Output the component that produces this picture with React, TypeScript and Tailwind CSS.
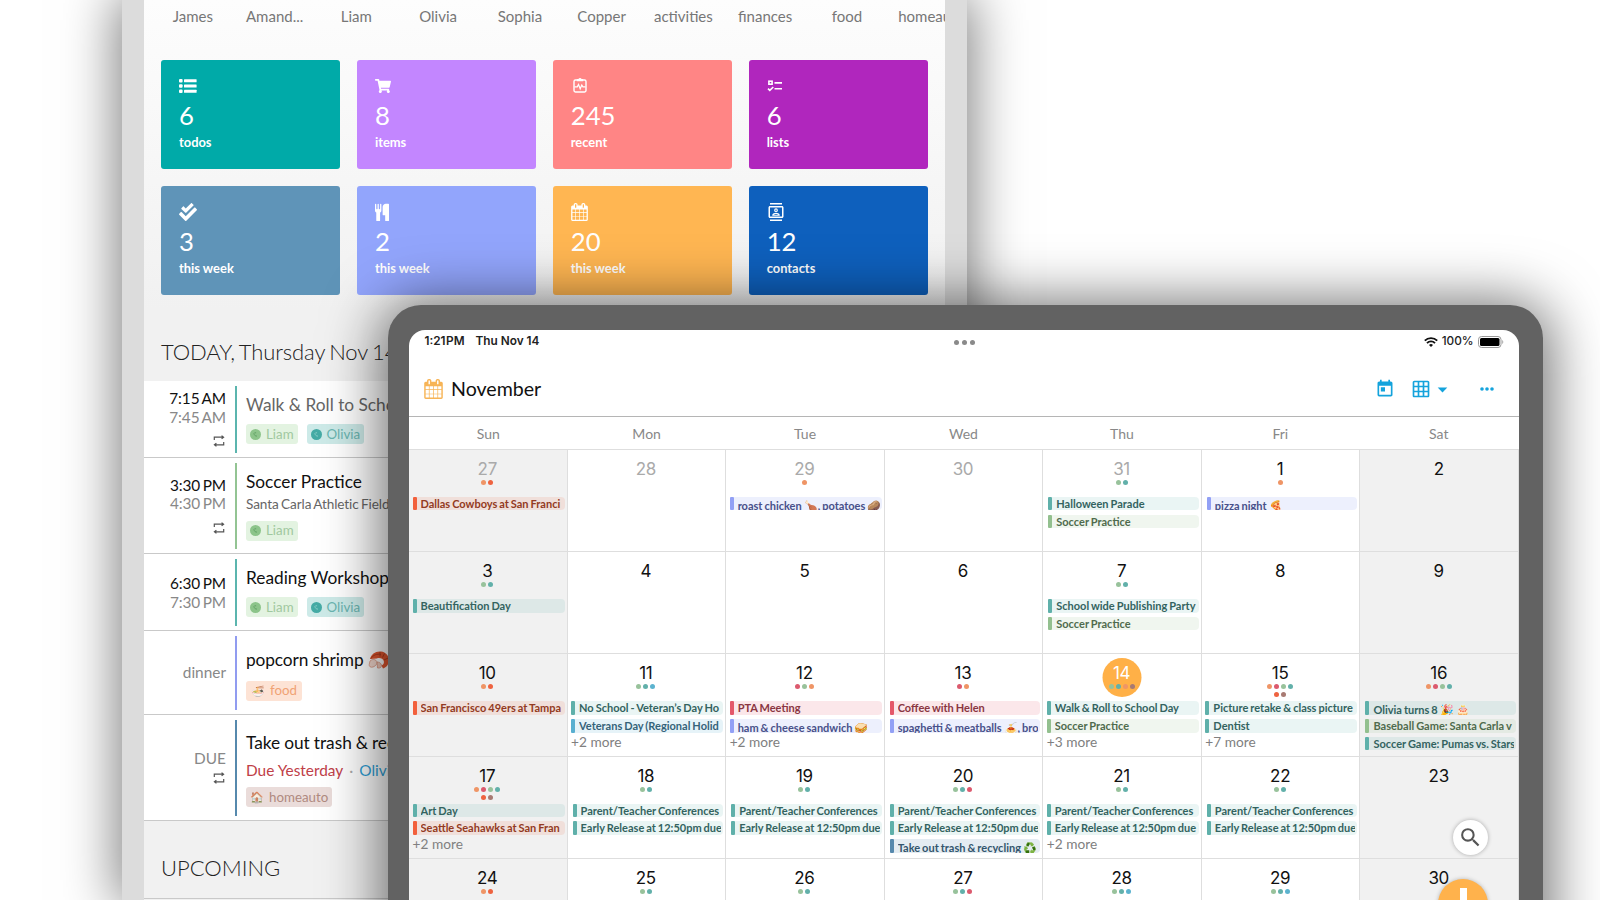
import type { ReactNode } from 'react'
import clsx from 'clsx'
import {
  MdArrowDropDown,
  MdGridOn,
  MdOutlineContacts,
  MdSearch,
  MdToday,
} from 'react-icons/md'
import { FaCheckDouble, FaShoppingCart } from 'react-icons/fa'

/* ---------- icons ---------- */

function CalendarIcon({ className }: { className?: string }) {
  return (
    <svg viewBox="0 0 1664 1792" fill="currentColor" className={className}>
      <path d="M128 1664h288v-288h-288v288zm352 0h320v-288h-320v288zm-352-352h288v-320h-288v320zm352 0h320v-320h-320v320zm-352-384h288v-288h-288v288zm736 736h320v-288h-320v288zm-384-736h320v-288h-320v288zm768 736h288v-288h-288v288zm-384-352h320v-320h-320v320zm-352-864v-288q0-13-9.5-22.5t-22.5-9.5h-64q-13 0-22.5 9.5t-9.5 22.5v288q0 13 9.5 22.5t22.5 9.5h64q13 0 22.5-9.5t9.5-22.5zm736 864h288v-320h-288v320zm-384-384h320v-288h-320v288zm384 0h288v-288h-288v288zm32-480v-288q0-13-9.5-22.5t-22.5-9.5h-64q-13 0-22.5 9.5t-9.5 22.5v288q0 13 9.5 22.5t22.5 9.5h64q13 0 22.5-9.5t9.5-22.5zm384-64v1280q0 52-38 90t-90 38h-1408q-52 0-90-38t-38-90v-1280q0-52 38-90t90-38h128v-96q0-66 47-113t113-47h64q66 0 113 47t47 113v96h384v-96q0-66 47-113t113-47h64q66 0 113 47t47 113v96h128q52 0 90 38t38 90z" />
    </svg>
  )
}

function ListIcon() {
  return (
    <svg viewBox="0 0 18 14" fill="currentColor" className="h-[14px] w-[18px]">
      <rect x="0" y="0" width="3.6" height="3.4" rx="1" />
      <rect x="0" y="5.3" width="3.6" height="3.4" rx="1" />
      <rect x="0" y="10.6" width="3.6" height="3.4" rx="1" />
      <rect x="5" y="0.2" width="12.6" height="3" rx="0.5" />
      <rect x="5" y="5.5" width="12.6" height="3" rx="0.5" />
      <rect x="5" y="10.8" width="12.6" height="3" rx="0.5" />
    </svg>
  )
}

function PulseIcon() {
  return (
    <svg
      viewBox="0 0 18 18"
      fill="none"
      stroke="currentColor"
      strokeWidth="1.4"
      className="ml-[1px] h-[18px] w-[18px]"
    >
      <rect x="2" y="3" width="12" height="12" rx="1.4" />
      <path d="M5.5 3.6v-1H7a1 1 0 0 1 2 0h1.5v1z" fill="currentColor" />
      <path d="M2.5 9.8h2.8l1.2-2.4 1.7 4.4 1.6-3.8 1.1 1.8h2.6" strokeWidth="1.2" />
    </svg>
  )
}

function ChecklistIcon() {
  return (
    <svg
      viewBox="0 0 18 14"
      fill="none"
      stroke="currentColor"
      strokeWidth="1.6"
      className="h-[14px] w-[18px]"
    >
      <rect x="1.9" y="2.2" width="3.2" height="3" />
      <path d="M7.5 3.9H15M7.5 9.7H15M1 9.7l1.8 1.7L6.3 8" />
    </svg>
  )
}

function CutleryIcon() {
  return (
    <svg viewBox="0 0 1408 1792" fill="currentColor" className="h-[18px] w-[14px]">
      <path d="M640 128v640q0 61-35.5 111t-92.5 70v779q0 52-38 90t-90 38h-128q-52 0-90-38t-38-90V949q-57-20-92.5-70T0 768V128q0-26 19-45t45-19 45 19 19 45v416q0 26 19 45t45 19 45-19 19-45V128q0-26 19-45t45-19 45 19 19 45v416q0 26 19 45t45 19 45-19 19-45V128q0-26 19-45t45-19 45 19 19 45zm768 0v1600q0 52-38 90t-90 38h-128q-52 0-90-38t-38-90v-512H800q-13 0-22.5-9.5T768 1184V384q0-132 94-226t226-94h256q26 0 45 19t19 45z" />
    </svg>
  )
}

function RepeatIcon() {
  return (
    <svg
      viewBox="0 0 12 12"
      fill="none"
      stroke="#555"
      strokeWidth="1.2"
      className="h-3 w-3"
    >
      <path d="M1.3 5V2.2H10M8.6.6l2 1.6-2 1.6M10.7 7v2.800H2M3.400 8.200l-2 1.600 2 1.600" />
    </svg>
  )
}

function ShrimpIcon() {
  return (
    <svg viewBox="0 0 22 20" className="inline-block h-[20px] w-[22px] align-[-4px]">
      <path d="M2 9C3 4 8 .8 13 1.500c5 .6 8 4.500 8 8.500 0 4-2.500 7.500-6 8.500l-1.500-3c2-.8 2.800-2.500 2.300-4.500-.8-2.500-4-3.500-7-2.500z" fill="#e4572e" />
      <path d="M3 8.500C5 5 9 3.500 13 4.500M12 2v4.500M16.500 3.500l-2 4M20 8l-4 2" stroke="#a93a1c" strokeWidth=".9" fill="none" />
      <path d="M2 11c2-2 5-2 6.500 0S8 16 5 17c-2.500.8-4-.5-3.800-2.500z" fill="#f4d9cf" stroke="#d88b72" strokeWidth=".7" />
      <path d="M9 12c2 0 4 1 4.500 3s-1.500 3.500-4 3z" fill="#f1cabc" stroke="#d88b72" strokeWidth=".7" />
    </svg>
  )
}

/* ---------- dashboard (tablet at the back) ---------- */

const PEOPLE = [
  'James', 'Amand...', 'Liam', 'Olivia', 'Sophia', 'Copper',
  'activities', 'finances', 'food', 'homeauto',
]

const TILES: { bg: string; count: number; label: string; icon: ReactNode }[] = [
  { bg: 'bg-[#00aaa8]', count: 6, label: 'todos', icon: <ListIcon /> },
  { bg: 'bg-[#c386ff]', count: 8, label: 'items', icon: <FaShoppingCart size={16} /> },
  { bg: 'bg-[#ff8585]', count: 245, label: 'recent', icon: <PulseIcon /> },
  { bg: 'bg-[#b026bd]', count: 6, label: 'lists', icon: <ChecklistIcon /> },
  { bg: 'bg-[#5f94b8]', count: 3, label: 'this week', icon: <FaCheckDouble size={18} /> },
  { bg: 'bg-[#92a5fc]', count: 2, label: 'this week', icon: <CutleryIcon /> },
  {
    bg: 'bg-[#ffb652]',
    count: 20,
    label: 'this week',
    icon: <CalendarIcon className="h-[18px] w-[17px]" />,
  },
  {
    bg: 'bg-[#0e60bd]',
    count: 12,
    label: 'contacts',
    icon: <MdOutlineContacts size={18} />,
  },
]

function PersonTag({ name, color }: { name: string; color: 'green' | 'teal' }) {
  const green = color === 'green'
  return (
    <span
      className={clsx(
        'flex h-5 items-center gap-[5px] rounded-[3px] px-[4px] text-[13.3px]',
        green ? 'bg-[#e3f3e1] text-[#a0c89f]' : 'bg-[#cdeae8] text-[#69b5b0]'
      )}
    >
      <svg viewBox="0 0 11 11" className="h-[11px] w-[11px]">
        <circle cx="5.5" cy="5.5" r="5.5" fill={green ? '#8cc48a' : '#45aba5'} />
        <path
          d="M3.8 4.2c.3 1.8 1.4 3 3.2 2.9M4.5 3.8h1.6"
          stroke={green ? '#5f9e62' : '#8fd0cb'}
          strokeWidth="0.9"
          fill="none"
        />
      </svg>
      {name}
    </span>
  )
}

function AgendaRow({
  height,
  bar,
  time,
  children,
}: {
  height: string
  bar: string
  time: ReactNode
  children: ReactNode
}) {
  return (
    <div className={clsx('flex border-b border-[#c9c9c9] bg-white py-[5px] pb-[4px]', height)}>
      <div className="w-[82px] text-right text-[15.4px] leading-[18.5px] text-[#888]">
        {time}
      </div>
      <div className={clsx('ml-[9px] w-[2px]', bar)} />
      <div className="ml-[9px] flex-1 whitespace-nowrap">{children}</div>
    </div>
  )
}

function TimeRange({ from, to }: { from: string; to: string }) {
  return (
    <div className="flex flex-col tracking-[-0.1px] [word-spacing:-1.3px]">
      <span className="text-[#111]">{from}</span>
      <span>{to}</span>
    </div>
  )
}

function Dashboard() {
  return (
    <div className="ml-[122px] h-[900px] w-[845px] bg-[#dcdcdc] px-[22px] shadow-[0_0_50px_5px_rgba(0,0,0,0.5)]">
      <div className="h-full overflow-hidden bg-[linear-gradient(#fdfdfd,#f1f1f1_310px)]">
        <div className="flex h-[59.7px] pl-[8px]">
          {PEOPLE.map((p) => (
            <div
              key={p}
              className="w-[81.75px] shrink-0 pt-[6px] text-center text-[15px] leading-[21px] text-[#777] last:pl-[6px]"
            >
              {p}
            </div>
          ))}
        </div>

        <div className="grid grid-cols-4 gap-x-[17px] gap-y-[17px] px-[17px] pr-[17.5px]">
          {TILES.map((t) => (
            <div
              key={t.bg}
              className={clsx('h-[109px] rounded-[3px] pt-[17px] pl-[18px] text-white', t.bg)}
            >
              <div className="flex h-[19px] items-center">{t.icon}</div>
              <div className="mt-[4px] text-[25.7px] leading-[30px]">{t.count}</div>
              <div className="mt-[3.5px] text-[12.9px] leading-[18px] font-bold">{t.label}</div>
            </div>
          ))}
        </div>

        <h2 className="mt-[26.8px] flex h-[60px] items-center pl-[17px] text-[22px] font-light tracking-[-0.1px] text-[#222] [word-spacing:-1.5px]">
          TODAY, Thursday Nov 14
        </h2>

        <AgendaRow
          height="h-[76.5px]"
          bar="bg-[#5bb5ae]"
          time={
            <div className="flex flex-col items-end pt-[3px]">
              <TimeRange from="7:15 AM" to="7:45 AM" />
              <div className="mt-[9px] mr-px"><RepeatIcon /></div>
            </div>
          }
        >
          <div className="pt-[7px] text-[17.3px] leading-[24px] text-[#666]">
            Walk &amp; Roll to School Day
          </div>
          <div className="mt-[7px] flex gap-[9px]">
            <PersonTag name="Liam" color="green" />
            <PersonTag name="Olivia" color="teal" />
          </div>
        </AgendaRow>

        <AgendaRow
          height="h-[96.5px]"
          bar="bg-[#93c493]"
          time={
            <div className="flex flex-col items-end pt-[13px]">
              <TimeRange from="3:30 PM" to="4:30 PM" />
              <div className="mt-[9px] mr-px"><RepeatIcon /></div>
            </div>
          }
        >
          <div className="pt-[7px] text-[17.3px] leading-[24px] text-[#111]">Soccer Practice</div>
          <div className="text-[13.6px] leading-[21px] tracking-[-0.1px] text-[#666] [word-spacing:-1px]">
            Santa Carla Athletic Fields
          </div>
          <div className="mt-[6px] flex">
            <PersonTag name="Liam" color="green" />
          </div>
        </AgendaRow>

        <AgendaRow
          height="h-[76.5px]"
          bar="bg-[#5bb5ae]"
          time={
            <div className="flex flex-col items-end pt-[15px]">
              <TimeRange from="6:30 PM" to="7:30 PM" />
            </div>
          }
        >
          <div className="pt-[7px] text-[17.3px] leading-[24px] text-[#111]">
            Reading Workshop
          </div>
          <div className="mt-[7px] flex gap-[9px]">
            <PersonTag name="Liam" color="green" />
            <PersonTag name="Olivia" color="teal" />
          </div>
        </AgendaRow>

        <AgendaRow
          height="h-[84px]"
          bar="bg-[#919cf0]"
          time={<div className="pt-[27px]">dinner</div>}
        >
          <div className="h-[36px] pt-[12px] text-[17.3px] leading-[24px] text-[#111]">
            <span className="tracking-[-0.1px]">popcorn shrimp</span> <ShrimpIcon />
          </div>
          <div className="mt-[9px] flex">
            <span className="flex h-5 items-center rounded-[3px] bg-[#fde3d5] px-[5px] text-[13.3px] text-[#f0a274]">
              <span className="mr-[5px] text-[11px] opacity-80">🍜</span>
              food
            </span>
          </div>
        </AgendaRow>

        <AgendaRow
          height="h-[106px]"
          bar="bg-[#5689ad]"
          time={
            <div className="flex flex-col items-end pt-[29px]">
              <span>DUE</span>
              <div className="mt-[5px] mr-px"><RepeatIcon /></div>
            </div>
          }
        >
          <div className="pt-[11.5px] text-[17.3px] leading-[24px] text-[#111] [word-spacing:-0.5px]">
            Take out trash &amp; recycling
          </div>
          <div className="mt-[3.5px] text-[15.4px] leading-[22px] text-[#c04048]">
            Due Yesterday<span className="mx-[6px] text-[#aaa]">·</span>
            <span className="text-[#2f9fd6]">Olivia</span>
          </div>
          <div className="mt-[6.5px] flex">
            <span className="flex h-5 items-center rounded-[3px] bg-[#eadcda] px-[4px] text-[13.3px] text-[#b08a80]">
              <span className="mr-[5px] text-[11px] opacity-80">🏠</span>
              homeauto
            </span>
          </div>
        </AgendaRow>

        <h2 className="flex h-[78px] items-center border-b border-[#c9c9c9] pt-[17px] pl-[17px] text-[22px] font-light text-[#222]">
          UPCOMING
        </h2>
      </div>
    </div>
  )
}

/* ---------- calendar (tablet in front) ---------- */

type Tone = 'teal' | 'green' | 'orange' | 'indigo' | 'red' | 'blue' | 'steel'

const TONES: Record<Tone, { bar: string; body: string }> = {
  teal: { bar: 'bg-[#5fb0aa]', body: 'bg-[#5fb0aa]/13 text-[#33635f]' },
  green: { bar: 'bg-[#93c08f]', body: 'bg-[#93c08f]/14 text-[#4f6b4d]' },
  orange: { bar: 'bg-[#f2603c]', body: 'bg-[#f2603c]/12 text-[#933a22]' },
  indigo: { bar: 'bg-[#92a0f5]', body: 'bg-[#92a0f5]/16 text-[#48508a]' },
  red: { bar: 'bg-[#e4586a]', body: 'bg-[#e4586a]/14 text-[#8a3642]' },
  blue: { bar: 'bg-[#58afd0]', body: 'bg-[#58afd0]/15 text-[#35637a]' },
  steel: { bar: 'bg-[#5689ad]', body: 'bg-[#5689ad]/16 text-[#33556d]' },
}

const DOTS = {
  a: 'bg-[#ef9566]', // amber
  o: 'bg-[#ee6340]', // orange
  g: 'bg-[#98c29b]', // green
  t: 'bg-[#62b0aa]', // teal
  r: 'bg-[#dc5a6e]', // red
  b: 'bg-[#a87a72]', // brown
  c: 'bg-[#5cb3cf]', // cyan
}

interface CalEvent {
  text: string
  tone: Tone
  /** Titles with emoji sit lower and get cut at the baseline. */
  low?: boolean
}

interface Day {
  n: number
  muted?: boolean
  today?: boolean
  dots?: string[]
  events?: CalEvent[]
  more?: number
  inset?: boolean
}

const CONFERENCES: CalEvent = { text: 'Parent/Teacher Conferences', tone: 'teal' }
const EARLY: CalEvent = { text: 'Early Release at 12:50pm due', tone: 'teal' }
const SOCCER: CalEvent = { text: 'Soccer Practice', tone: 'green' }

const DAYS: Day[] = [
  { n: 27, muted: true, dots: ['ao'], events: [{ text: 'Dallas Cowboys at San Franci', tone: 'orange' }] },
  { n: 28, muted: true },
  { n: 29, muted: true, dots: ['a'], events: [{ text: 'roast chicken 🍗, potatoes 🥔', tone: 'indigo', low: true }] },
  { n: 30, muted: true },
  { n: 31, muted: true, dots: ['gt'], inset: true, events: [{ text: 'Halloween Parade', tone: 'teal' }, SOCCER] },
  { n: 1, dots: ['a'], inset: true, events: [{ text: 'pizza night 🍕', tone: 'indigo', low: true }] },
  { n: 2 },
  { n: 3, dots: ['gt'], events: [{ text: 'Beautification Day', tone: 'teal' }] },
  { n: 4 },
  { n: 5 },
  { n: 6 },
  { n: 7, dots: ['gt'], inset: true, events: [{ text: 'School wide Publishing Party', tone: 'teal' }, SOCCER] },
  { n: 8 },
  { n: 9 },
  { n: 10, dots: ['ao'], events: [{ text: 'San Francisco 49ers at Tampa', tone: 'orange' }] },
  {
    n: 11,
    dots: ['gtc'],
    more: 2,
    events: [
      { text: 'No School - Veteran’s Day Ho', tone: 'teal' },
      { text: 'Veterans Day (Regional Holid', tone: 'blue' },
    ],
  },
  {
    n: 12,
    dots: ['rga'],
    more: 2,
    events: [
      { text: 'PTA Meeting', tone: 'red' },
      { text: 'ham & cheese sandwich 🥪', tone: 'indigo', low: true },
    ],
  },
  {
    n: 13,
    dots: ['ra'],
    inset: true,
    events: [
      { text: 'Coffee with Helen', tone: 'red' },
      { text: 'spaghetti & meatballs 🍝, broc', tone: 'indigo', low: true },
    ],
  },
  {
    n: 14,
    today: true,
    dots: ['gtab'],
    more: 3,
    events: [{ text: 'Walk & Roll to School Day', tone: 'teal' }, SOCCER],
  },
  {
    n: 15,
    dots: ['argt', 'ob'],
    more: 7,
    events: [
      { text: 'Picture retake & class picture', tone: 'teal' },
      { text: 'Dentist', tone: 'teal' },
    ],
  },
  {
    n: 16,
    dots: ['argt'],
    inset: true,
    events: [
      { text: 'Olivia turns 8 🎉 🎂', tone: 'teal', low: true },
      { text: 'Baseball Game: Santa Carla v', tone: 'green' },
      { text: 'Soccer Game: Pumas vs. Stars', tone: 'teal' },
    ],
  },
  {
    n: 17,
    dots: ['argt', 'ob'],
    more: 2,
    events: [
      { text: 'Art Day', tone: 'teal' },
      { text: 'Seattle Seahawks at San Fran', tone: 'orange' },
    ],
  },
  { n: 18, dots: ['gt'], inset: true, events: [CONFERENCES, EARLY] },
  { n: 19, dots: ['gt'], inset: true, events: [CONFERENCES, EARLY] },
  {
    n: 20,
    dots: ['gtr'],
    inset: true,
    events: [CONFERENCES, EARLY, { text: 'Take out trash & recycling ♻️', tone: 'steel', low: true }],
  },
  { n: 21, dots: ['gt'], more: 2, events: [CONFERENCES, EARLY] },
  { n: 22, dots: ['gt'], inset: true, events: [CONFERENCES, EARLY] },
  { n: 23 },
  { n: 24, dots: ['ao'] },
  { n: 25, dots: ['gt'] },
  { n: 26, dots: ['gt'] },
  { n: 27, dots: ['gtr'] },
  { n: 28, dots: ['gtc'] },
  { n: 29, dots: ['gtc'] },
  { n: 30 },
]

function EventChip({ event }: { event: CalEvent }) {
  const tone = TONES[event.tone]
  return (
    <div className="mb-[4.3px] flex h-[13.4px] overflow-hidden">
      <div className={clsx('w-[4px] shrink-0 rounded-[1px]', tone.bar)} />
      <div className={clsx('flex-1 overflow-hidden rounded-r-[4px] pr-[2px] pl-[4px]', tone.body)}>
        <div
          className={clsx(
            'overflow-hidden text-[11px] leading-[13px] font-bold whitespace-nowrap [word-spacing:-0.7px]',
            event.low && 'pt-[2px]'
          )}
        >
          {event.text}
        </div>
      </div>
    </div>
  )
}

function DayCell({ day, index }: { day: Day; index: number }) {
  const col = index % 7
  const weekend = col === 0 || col === 6
  return (
    <div
      className={clsx(
        'relative overflow-hidden border-t border-r border-[#dedede] pt-[9.2px]',
        weekend && 'bg-[#f1f1f1]'
      )}
    >
      {day.today && (
        <div className="absolute top-[4px] left-1/2 h-[39px] w-[39px] -translate-x-1/2 rounded-full bg-[#ffb047]" />
      )}
      <div
        className={clsx(
          'relative h-5 pr-px text-center font-[Inter] text-[17px] leading-5 tracking-[-0.3px]',
          day.muted ? 'text-[#aaa]' : day.today ? 'text-white' : 'text-[#111]'
        )}
      >
        {day.n}
      </div>
      <div className="relative flex h-[18px] flex-col gap-[3px] pt-[1px] pr-px">
        {day.dots?.map((row, i) => (
          <div key={i} className="flex justify-center gap-[2px]">
            {row.split('').map((d, j) => (
              <span
                key={j}
                className={clsx('h-[5px] w-[5px] rounded-full', DOTS[d as keyof typeof DOTS])}
              />
            ))}
          </div>
        ))}
      </div>
      <div className={clsx('pr-[2px]', day.inset ? 'pl-[5px]' : 'pl-[3.5px]')}>
        {day.events?.map((e) => <EventChip key={e.text} event={e} />)}
        {day.more && (
          <div className="-mt-[3px] text-[13.7px] leading-[16px] text-[#808080]">
            +{day.more} more
          </div>
        )}
      </div>
    </div>
  )
}

function StatusBar() {
  return (
    <div className="flex h-[24px] items-center justify-between px-[15.5px] pt-px font-[Inter] text-[11.8px] font-semibold text-[#222]">
      <div className="flex w-[200px] gap-[11px]">
        <span className="[word-spacing:-2.5px]">1:21 PM</span>
        <span>Thu Nov 14</span>
      </div>
      <div className="flex gap-[3px]">
        <span className="h-[5px] w-[5px] rounded-full bg-[#8a8a8a]" />
        <span className="h-[5px] w-[5px] rounded-full bg-[#8a8a8a]" />
        <span className="h-[5px] w-[5px] rounded-full bg-[#8a8a8a]" />
      </div>
      <div className="flex w-[200px] items-center justify-end">
        <svg viewBox="0 0 14 10" className="h-[10px] w-[14px]" fill="none" stroke="#111" strokeWidth="1.9">
          <path d="M.8 3.7a8.8 8.8 0 0 1 12.4 0M3 6.1a5.6 5.6 0 0 1 8 0" />
          <path d="M5 7.9a2.9 2.9 0 0 1 4 0L7 9.9z" fill="#111" stroke="none" />
        </svg>
        <span className="ml-[4px] font-medium">100%</span>
        <svg viewBox="0 0 26 12" className="ml-[4px] h-[12px] w-[26px]">
          <rect x=".5" y=".5" width="22.5" height="11" rx="3" fill="none" stroke="#999" />
          <rect x="2" y="2" width="19.5" height="8" rx="1.5" fill="#000" />
          <path d="M24.3 4v4c1.3-.5 1.3-3.5 0-4z" fill="#999" />
        </svg>
      </div>
    </div>
  )
}

function CalendarApp() {
  return (
    <div className="absolute top-[305px] left-[388px] h-[700px] w-[1155px] rounded-t-[33px] bg-[#626262] px-[21px] pt-[24.5px] pr-[24px] shadow-[0_4px_56px_8px_rgba(0,0,0,0.56)]">
      <div className="relative h-full overflow-hidden rounded-t-[16px] bg-white">
        <StatusBar />

        <div className="flex h-[63px] items-center border-b border-[#b5b5b5] pt-[9px] pr-[25px] pl-[15px]">
          <CalendarIcon className="h-[20px] w-[19px] text-[#f7b456]" />
          <h1 className="ml-[8px] text-[19.6px] text-[#111]">November</h1>
          <div className="ml-auto flex items-center text-[#14a3dc]">
            <MdToday size={20} />
            <MdGridOn size={20} className="ml-[16px]" />
            <MdArrowDropDown size={23} />
            <svg viewBox="0 0 14 4" fill="currentColor" className="ml-[26px] h-[4px] w-[14px]">
              <circle cx="2" cy="2" r="1.8" />
              <circle cx="7" cy="2" r="1.8" />
              <circle cx="12" cy="2" r="1.8" />
            </svg>
          </div>
        </div>

        <div className="grid h-[32.2px] grid-cols-7 items-center pt-px pr-px text-center text-[14px] text-[#888]">
          {['Sun', 'Mon', 'Tue', 'Wed', 'Thu', 'Fri', 'Sat'].map((d) => (
            <div key={d}>{d}</div>
          ))}
        </div>

        <div className="grid auto-rows-[102.3px] grid-cols-7">
          {DAYS.map((day, i) => (
            <DayCell key={i} day={day} index={i} />
          ))}
        </div>

        {/* floating buttons */}
        <button className="absolute top-[490.5px] left-[1044px] flex h-[35px] w-[35px] items-center justify-center rounded-full bg-white text-[#555] shadow-[0_0_4px_rgba(0,0,0,0.3)]">
          <MdSearch size={25} />
        </button>
        <button className="absolute top-[549.5px] left-[1029px] flex h-[50px] w-[50px] justify-center rounded-full bg-[#ffb24c] pt-[9px] shadow-[0_0_4px_rgba(0,0,0,0.25)]">
          <span className="h-[32px] w-[7px] bg-white" />
        </button>
      </div>
    </div>
  )
}

export default function App() {
  return (
    <div className="relative h-[900px] w-[1600px] overflow-hidden bg-white font-[Lato,sans-serif]">
      <Dashboard />
      <CalendarApp />
    </div>
  )
}
